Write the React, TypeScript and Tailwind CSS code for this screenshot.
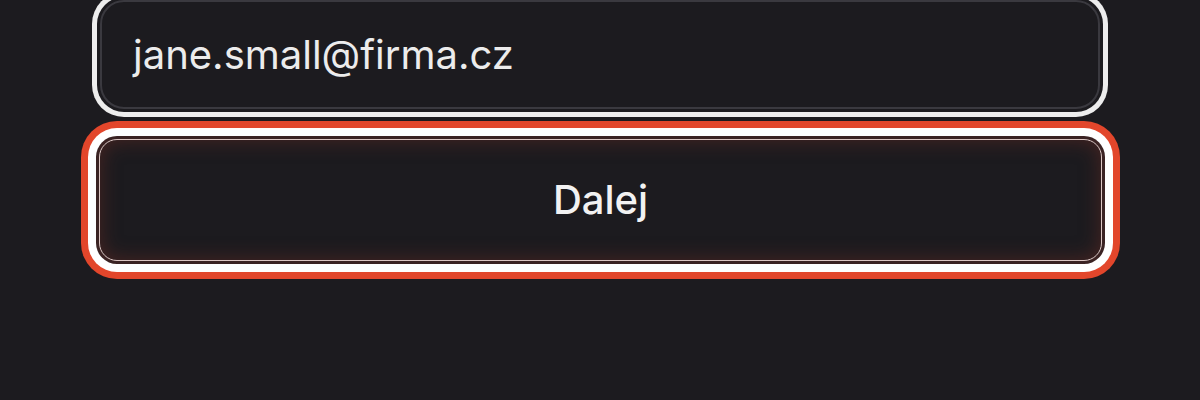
export default function App() {
  return (
    <div
      className="h-[400px] w-[1200px] overflow-hidden bg-[#1c1b1f]"
      style={{ fontFamily: "Inter, 'Noto Sans', sans-serif" }}
    >
      <div className="mx-auto flex w-[1000px] flex-col gap-[30px]">
        {/* email field, focused-looking */}
        <div className="flex h-[109px] items-center rounded-[24px] border-2 border-[#3a393f] bg-[#1c1b1f] px-[31px] shadow-[0_0_0_3px_#1c1b1f,0_0_0_8px_#ededed]">
          <span className="text-[40px] leading-none text-[#ececec]">jane.small@firma.cz</span>
        </div>

        {/* submit */}
        <button
          type="button"
          className="-ml-px flex h-[122px] w-[1003px] items-center justify-center rounded-[18px] border border-[#dcc6c3] bg-[#1c1b1f] shadow-[inset_0_0_20px_rgba(120,45,35,0.5),0_0_0_3px_#3b2323,0_0_0_11px_#ffffff,0_0_0_18px_#e2462b]"
        >
          <span className="text-[40px] font-medium leading-none text-[#f2f2f2]">Dalej</span>
        </button>
      </div>
    </div>
  );
}
